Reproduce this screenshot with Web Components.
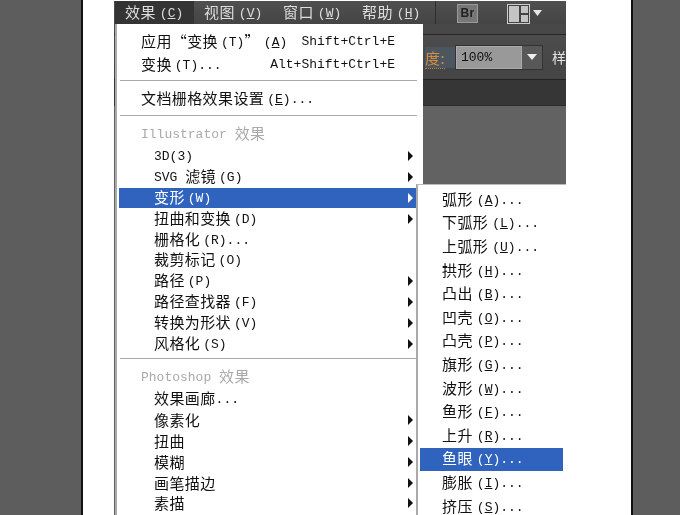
<!DOCTYPE html>
<html lang="zh">
<head>
<meta charset="utf-8">
<title>Illustrator 效果菜单</title>
<style>
  html, body { margin: 0; height: 515px; overflow: hidden; background: #fff; }
  body { font: 15px "Noto Sans CJK SC", sans-serif; letter-spacing: .4px; }
  /* latin parts of the labels are narrower than the hanzi */
  i { font: 13px "Liberation Mono", monospace; letter-spacing: 0; margin-left: 3px; position: relative; top: -1px; }
  i.l { margin-left: 0; }
  i.sp { margin-left: 4px; }
</style>
</head>
<body>

<template id="tpl-page">
  <style>
    :host { display: flex; height: 515px; overflow: hidden; filter: blur(.35px); }
    .side { background: #5d5d5d; flex: none; box-sizing: border-box; }
    .left { width: 83px; border-right: 2px solid #111; }
    .right { width: 49px; border-left: 2px solid #111; }
    .gap-l { width: 31px; flex: none; }
    .gap-r { width: 65px; flex: none; }
  </style>
  <div class="side left"></div>
  <div class="gap-l"></div>
  <slot></slot>
  <div class="gap-r"></div>
  <div class="side right"></div>
</template>

<template id="tpl-app">
  <style>
    :host { display: block; position: relative; width: 452px; height: 514px; margin-top: 1px; flex: none; overflow: hidden; background: #626262; }
  </style>
  <slot></slot>
</template>

<template id="tpl-menubar">
  <style>
    :host { display: flex; height: 23px; background: linear-gradient(#505050, #444); color: #ddd; padding-left: 1px; align-items: stretch; }
    ::slotted(ps-title) { width: 79px; }
    .sep { width: 1px; margin: 0 0 0 4px; background: #2e2e2e; }
    .br { width: 19px; height: 17px; margin: 3px 29px 0 21px; background: #777; border: 1px solid #9a9a9a; color: #222; font: bold 12px/17px "Liberation Sans", sans-serif; text-align: center; }
    svg { margin-top: 3px; flex: none; }
  </style>
  <slot></slot>
  <div class="sep"></div>
  <div class="br">Br</div>
  <svg width="36" height="20" viewBox="0 0 36 20">
    <rect x=".5" y=".5" width="22" height="19" fill="#444" stroke="#ccc"/>
    <rect x="2" y="2" width="10" height="16" fill="#c4c4c4"/>
    <rect x="14" y="2" width="7" height="7" fill="#c4c4c4"/>
    <rect x="14" y="11" width="7" height="7" fill="#c4c4c4"/>
    <path d="M26 6h9l-4.500 6z" fill="#e6e6e6"/>
  </svg>
</template>

<template id="tpl-title">
  <style>
    :host { display: block; box-sizing: border-box; padding-left: 10px; line-height: 22px; white-space: nowrap; }
    :host([active]) { background: #343434; }
  </style>
  <slot></slot>
</template>

<template id="tpl-toolbar">
  <style>
    :host { display: block; }
    .top { height: 10px; background: #484848; border-bottom: 1px solid #262626; }
    .opts { height: 44px; background: linear-gradient(#4c4c4c, #444); border-bottom: 1px solid #222; display: flex; align-items: center; padding-left: 311px; color: #e4e4e4; overflow: hidden; }
    .label { color: #d88c3c; border-bottom: 1px dotted #b98540; line-height: 17px; width: 27px; white-space: nowrap; }
    .tint { background: #4c5660; padding-right: 10px; }
    .field { display: flex; height: 23px; border: 1px solid #333; }
    .value { width: 66px; background: #999; color: #111; font: 13px/22px "Liberation Mono", monospace; letter-spacing: 0; padding-left: 4px; box-sizing: border-box; border: 1px solid #aaa; }
    .drop { width: 20px; background: #585858; display: flex; align-items: center; justify-content: center; }
    .next { margin-left: 9px; white-space: nowrap; font-size: 14px; line-height: 16px; }
    .bottom { height: 25px; background: #363636; border-bottom: 1px solid #2b2b2b; }
  </style>
  <div class="top"></div>
  <div class="opts">
    <span class="tint"><span class="label">度:</span></span>
    <div class="field">
      <div class="value">100%</div>
      <div class="drop"><svg width="10" height="6" viewBox="0 0 10 6"><path d="M0 0h10L5 6z" fill="#eee"/></svg></div>
    </div>
    <span class="next">样</span>
  </div>
  <div class="bottom"></div>
</template>

<template id="tpl-menu">
  <style>
    :host { display: flex; flex-direction: column; position: absolute; box-sizing: border-box; background: #fff; color: #111; overflow: hidden; border-left: 2px solid #aaa; }
    :host([main]) { left: 1px; top: 23px; width: 308px; height: 492px; padding: 6px 6px 0 2px; }
    :host([sub]) { left: 302px; top: 183px; width: 150px; height: 332px; padding: 3px 3px 0 2px; border-top: 1px solid #bbb; }
  </style>
  <slot></slot>
</template>

<template id="tpl-item">
  <style>
    :host { display: flex; flex: none; align-items: center; height: 20.8px; padding-left: 35px; white-space: nowrap; position: relative; }
    :host([top]) { height: 23px; padding-left: 22px; }
    :host([head]) { height: 22px; padding-left: 22px; color: #aaa; margin-bottom: 1px; }
    :host([tall]) { height: 23.6px; padding-left: 22px; }
    :host([on]) { background: #2f63bd; color: #fff; }
    .text { line-height: 16px; }
    .key { margin-left: auto; margin-right: 22px; font: 13px "Liberation Mono", monospace; letter-spacing: 0; }
    .arrow { position: absolute; right: 4px; top: 50%; margin-top: -5px; display: none; }
    :host([more]) .arrow { display: block; }
  </style>
  <span class="text"><slot></slot></span>
  <span class="key"></span>
  <svg class="arrow" width="5" height="10" viewBox="0 0 5 10"><path d="M0 0l5 5-5 5z" fill="currentColor"/></svg>
</template>

<template id="tpl-sep">
  <style>
    :host { display: block; flex: none; height: 1px; margin: 4px 0 7px 1px; background: #aaa; }
    :host([wide]) { margin: 5px 0 7px 1px; }
  </style>
</template>

<ps-page>
  <ps-app>
    <ps-menubar>
      <ps-title active>效果<i class="sp">(<u>C</u>)</i></ps-title>
      <ps-title>视图<i class="sp">(<u>V</u>)</i></ps-title>
      <ps-title>窗口<i class="sp">(<u>W</u>)</i></ps-title>
      <ps-title>帮助<i class="sp">(<u>H</u>)</i></ps-title>
    </ps-menubar>
    <ps-toolbar></ps-toolbar>

    <ps-menu main>
      <ps-item top shortcut="Shift+Ctrl+E">应用“变换<i>(T)</i>”<i class="sp">(<u>A</u>)</i></ps-item>
      <ps-item top shortcut="Alt+Shift+Ctrl+E">变换<i>(T)...</i></ps-item>
      <ps-sep></ps-sep>
      <ps-item top style="height:22px">文档栅格效果设置<i>(<u>E</u>)...</i></ps-item>
      <ps-sep wide></ps-sep>
      <ps-item head><i class="l">Illustrator&nbsp;</i>效果</ps-item>
      <ps-item more><i class="l">3D(3)</i></ps-item>
      <ps-item more><i class="l">SVG&nbsp;</i>滤镜<i>(G)</i></ps-item>
      <ps-item more on>变形<i>(W)</i></ps-item>
      <ps-item more>扭曲和变换<i>(D)</i></ps-item>
      <ps-item>栅格化<i>(R)...</i></ps-item>
      <ps-item>裁剪标记<i>(O)</i></ps-item>
      <ps-item more>路径<i>(P)</i></ps-item>
      <ps-item more>路径查找器<i>(F)</i></ps-item>
      <ps-item more>转换为形状<i>(V)</i></ps-item>
      <ps-item more>风格化<i>(S)</i></ps-item>
      <ps-sep></ps-sep>
      <ps-item head><i class="l">Photoshop&nbsp;</i>效果</ps-item>
      <ps-item>效果画廊<i class="l">...</i></ps-item>
      <ps-item more>像素化</ps-item>
      <ps-item more>扭曲</ps-item>
      <ps-item more>模糊</ps-item>
      <ps-item more>画笔描边</ps-item>
      <ps-item more>素描</ps-item>
    </ps-menu>

    <ps-menu sub>
      <ps-item tall>弧形<i class="sp">(<u>A</u>)...</i></ps-item>
      <ps-item tall>下弧形<i class="sp">(<u>L</u>)...</i></ps-item>
      <ps-item tall>上弧形<i class="sp">(<u>U</u>)...</i></ps-item>
      <ps-item tall>拱形<i class="sp">(<u>H</u>)...</i></ps-item>
      <ps-item tall>凸出<i class="sp">(<u>B</u>)...</i></ps-item>
      <ps-item tall>凹壳<i class="sp">(<u>O</u>)...</i></ps-item>
      <ps-item tall>凸壳<i class="sp">(<u>P</u>)...</i></ps-item>
      <ps-item tall>旗形<i class="sp">(<u>G</u>)...</i></ps-item>
      <ps-item tall>波形<i class="sp">(<u>W</u>)...</i></ps-item>
      <ps-item tall>鱼形<i class="sp">(<u>F</u>)...</i></ps-item>
      <ps-item tall>上升<i class="sp">(<u>R</u>)...</i></ps-item>
      <ps-item tall on>鱼眼<i class="sp">(<u>Y</u>)...</i></ps-item>
      <ps-item tall>膨胀<i class="sp">(<u>I</u>)...</i></ps-item>
      <ps-item tall>挤压<i class="sp">(<u>S</u>)...</i></ps-item>
    </ps-menu>
  </ps-app>
</ps-page>

<script>
  class TemplateElement extends HTMLElement {
    constructor() {
      super();
      const tpl = document.getElementById(this.constructor.tpl);
      this.attachShadow({ mode: "open" }).appendChild(tpl.content.cloneNode(true));
    }
  }

  class PsItem extends TemplateElement {
    static tpl = "tpl-item";
    connectedCallback() {
      this.shadowRoot.querySelector(".key").textContent = this.getAttribute("shortcut") || "";
    }
  }

  const simple = {
    "ps-page": "tpl-page",
    "ps-app": "tpl-app",
    "ps-menubar": "tpl-menubar",
    "ps-title": "tpl-title",
    "ps-toolbar": "tpl-toolbar",
    "ps-menu": "tpl-menu",
    "ps-sep": "tpl-sep",
  };

  for (const [name, tpl] of Object.entries(simple)) {
    customElements.define(name, class extends TemplateElement { static tpl = tpl; });
  }
  customElements.define("ps-item", PsItem);
</script>
</body>
</html>
